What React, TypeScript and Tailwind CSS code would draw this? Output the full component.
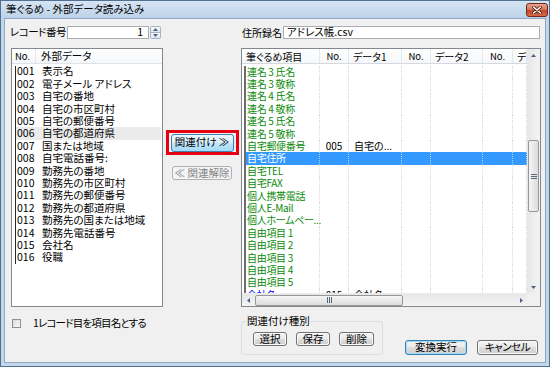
import React from 'react';

// 外部データ読み込みダイアログ（Vista Basic 風）

const leftRows = [
  ['001', '表示名'],
  ['002', '電子メール アドレス'],
  ['003', '自宅の番地'],
  ['004', '自宅の市区町村'],
  ['005', '自宅の郵便番号'],
  ['006', '自宅の都道府県'],
  ['007', '国または地域'],
  ['008', '自宅電話番号:'],
  ['009', '勤務先の番地'],
  ['010', '勤務先の市区町村'],
  ['011', '勤務先の郵便番号'],
  ['012', '勤務先の都道府県'],
  ['013', '勤務先の国または地域'],
  ['014', '勤務先電話番号'],
  ['015', '会社名'],
  ['016', '役職'],
];

type GridRow = { name: string; no?: string; data?: string; blue?: boolean; selected?: boolean };

const gridRows: GridRow[] = [
  { name: '連名 3 氏名' },
  { name: '連名 3 敬称' },
  { name: '連名 4 氏名' },
  { name: '連名 4 敬称' },
  { name: '連名 5 氏名' },
  { name: '連名 5 敬称' },
  { name: '自宅郵便番号', no: '005', data: '自宅の...' },
  { name: '自宅住所', selected: true },
  { name: '自宅TEL' },
  { name: '自宅FAX' },
  { name: '個人携帯電話' },
  { name: '個人E-Mail' },
  { name: '個人ホームペー...' },
  { name: '自由項目 1' },
  { name: '自由項目 2' },
  { name: '自由項目 3' },
  { name: '自由項目 4' },
  { name: '自由項目 5' },
  { name: '会社名', no: '015', data: '会社名', blue: true },
];

const btn =
  'flex items-center justify-center rounded-[3px] border leading-none border-[#707070] bg-[linear-gradient(#f2f2f2_0%,#ebebeb_49%,#dddddd_50%,#cfcfcf_100%)] shadow-[inset_0_0_0_1px_#fbfbfb]';

function Tri({ dir }: { dir: 'up' | 'down' | 'left' | 'right' }) {
  if (dir === 'up' || dir === 'down') {
    return (
      <svg viewBox="0 0 5 3" className="w-[5px] h-[3px]">
        <polygon points={dir === 'up' ? '0,3 2.5,0 5,3' : '0,0 2.5,3 5,0'} fill="#4d6185" />
      </svg>
    );
  }
  return (
    <svg viewBox="0 0 3 5" className="w-[3px] h-[5px]">
      <polygon points={dir === 'left' ? '3,0 0,2.5 3,5' : '0,0 3,2.5 0,5'} fill="#4d6185" />
    </svg>
  );
}

function CloseButton() {
  return (
    <div className="w-[22px] h-[14px] rounded-[3px] border border-[#6e2a1e] bg-[linear-gradient(#eaa58f_0%,#d8765d_45%,#c1472b_55%,#d86a48_100%)] flex items-center justify-center">
      <svg viewBox="0 0 10 8" className="w-[10px] h-[8px]">
        <path d="M1.5 1 L8.5 7 M8.5 1 L1.5 7" stroke="#5a1a10" strokeWidth="3" strokeLinecap="round" />
        <path d="M1.5 1 L8.5 7 M8.5 1 L1.5 7" stroke="#ffffff" strokeWidth="1.6" strokeLinecap="round" />
      </svg>
    </div>
  );
}

function LeftList() {
  return (
    <div className="mt-[9px] h-[259px] border border-[#828790] bg-white flex flex-col">
      <div className="h-[15px] flex items-center border-b border-[#dde3ea] bg-[linear-gradient(#ffffff,#f5f7f9)]">
        <div className="w-[24px] shrink-0 h-full flex items-center pl-[3px] border-r border-[#e3e8ee] text-[9.5px]">No.</div>
        <div className="pl-[5px] whitespace-nowrap">外部データ</div>
      </div>
      <div className="pt-[1.5px]">
        {leftRows.map(([no, label]) => (
          <div
            key={no}
            className={`h-[12.4px] flex items-center ml-[3px] mr-px border-l border-[#2a2a2a] ${no === '006' ? 'bg-[#ebebeb]' : ''}`}
          >
            <span className="w-[26px] shrink-0 pl-px leading-none">{no}</span>
            <span className="leading-none whitespace-nowrap">{label}</span>
          </div>
        ))}
      </div>
    </div>
  );
}

const headCells = [
  { w: 'w-[78px]', t: '筆ぐるめ項目', c: 'pl-[4px]' },
  { w: 'w-[29px]', t: 'No.', c: 'justify-center text-[9.5px]' },
  { w: 'w-[53px]', t: 'データ1', c: 'pl-[4px]' },
  { w: 'w-[29px]', t: 'No.', c: 'justify-center text-[9.5px]' },
  { w: 'w-[52px]', t: 'データ2', c: 'pl-[4px]' },
  { w: 'w-[30px]', t: 'No.', c: 'justify-center text-[9.5px]' },
  { w: 'w-[14px]', t: 'デ', c: 'pl-[4px] overflow-hidden' },
];

const rowCells = ['w-[74px]', 'w-[29px]', 'w-[53px]', 'w-[29px]', 'w-[52px]', 'w-[30px]', 'w-[14px]'];

function Grip({ vertical }: { vertical?: boolean }) {
  return vertical ? (
    <svg viewBox="0 0 6 5" className="w-[6px] h-[5px]">
      <path d="M0 0.5H6M0 2.5H6M0 4.5H6" stroke="#5d6b82" strokeWidth="1" />
    </svg>
  ) : (
    <svg viewBox="0 0 5 6" className="w-[5px] h-[6px]">
      <path d="M0.5 0V6M2.5 0V6M4.5 0V6" stroke="#5d6b82" strokeWidth="1" />
    </svg>
  );
}

function Grid() {
  return (
    <div className="mt-[9px] h-[259px] border border-[#828790] bg-white flex text-[10px]">
      <div className="w-[285px] flex flex-col">
        <div className="h-[15px] flex border-b border-[#d5d9de] bg-[linear-gradient(#ffffff,#f5f7f9)]">
          {headCells.map((h, i) => (
            <div key={i} className={`${h.w} shrink-0 h-full flex items-center whitespace-nowrap border-r border-[#e3e8ee] ${h.c}`}>
              {h.t}
            </div>
          ))}
        </div>
        <div className="flex-1 overflow-hidden pt-[1.5px]">
          {gridRows.map((r, i) => {
            const texts = [r.name, r.no ?? '', r.data ?? '', '', '', '', ''];
            return (
              <div
                key={i}
                className={`h-[12.4px] ml-[2px] flex border-l-2 border-[#6d6d6d] ${r.selected ? 'bg-[#3399ff] text-white' : ''}`}
              >
                {rowCells.map((w, j) => (
                  <div
                    key={j}
                    className={`${w} shrink-0 h-full flex items-center whitespace-nowrap leading-none border-r border-dotted ${
                      r.selected ? 'border-[#a9d1fb]' : 'border-[#dcdcdc]'
                    } ${j === 0 ? 'pl-px tracking-[-0.3px]' : j === 1 ? 'justify-center' : j === 2 ? 'pl-[5px]' : ''} ${
                      j === 0 && !r.selected ? (r.blue ? 'text-[#0000ff]' : 'text-[#0a8a0a]') : ''
                    }`}
                  >
                    {texts[j]}
                  </div>
                ))}
              </div>
            );
          })}
        </div>
        <div className="h-[13px] flex items-center bg-[linear-gradient(#e6e6e6,#f4f4f4)] border-t border-[#ececec]">
          <div className="w-[12px] h-full flex items-center justify-center">
            <Tri dir="left" />
          </div>
          <div className="ml-px w-[148px] h-[11px] rounded-[2px] border border-[#979797] bg-[linear-gradient(#f5f5f5,#dcdcdc)] flex items-center justify-center">
            <Grip />
          </div>
          <div className="flex-1" />
          <div className="w-[12px] h-full flex items-center justify-center">
            <Tri dir="right" />
          </div>
        </div>
      </div>
      <div className="w-[13px] flex flex-col">
        <div className="flex-1 flex flex-col bg-[linear-gradient(90deg,#e6e6e6,#f4f4f4)]">
          <div className="h-[12px] flex items-center justify-center">
            <Tri dir="up" />
          </div>
          <div className="h-[79px]" />
          <div className="mx-px h-[72px] rounded-[2px] border border-[#979797] bg-[linear-gradient(90deg,#f5f5f5,#dcdcdc)] flex items-center justify-center">
            <Grip vertical />
          </div>
          <div className="flex-1" />
          <div className="h-[12px] flex items-center justify-center">
            <Tri dir="down" />
          </div>
        </div>
        <div className="h-[13px] bg-[#f0f0f0]" />
      </div>
    </div>
  );
}

export default function App() {
  return (
    <div className="w-[550px] h-[367px] overflow-hidden border border-[#52708f] bg-[#c3d6eb] flex flex-col font-['Noto_Sans_CJK_JP','Noto_Sans',sans-serif] [font-feature-settings:'palt'] text-[10.5px] text-black">
      <div className="h-[17px] flex items-center justify-between pl-[5px] pr-px bg-[linear-gradient(#d6e4f3,#bdd2e9)]">
        <span className="leading-none">筆ぐるめ - 外部データ読み込み</span>
        <CloseButton />
      </div>

      <div className="mx-[3px] mb-[3px] flex-1 border border-[#8fa8c4] bg-[#f0f0f0] flex pl-[6px] pt-[7px] pr-[4px]">
        {/* 左：外部データ */}
        <div className="w-[152px] shrink-0 flex flex-col">
          <div className="h-[13px] flex items-center">
            <span className="w-[57px] shrink-0 -ml-px leading-none whitespace-nowrap tracking-[-0.5px]">レコード番号</span>
            <div className="w-[82px] shrink-0 h-[13px] bg-white border border-[#abadb3] flex items-center justify-end pr-[5px] leading-none">
              1
            </div>
            <div className="ml-px w-[11px] shrink-0 h-[13px] flex flex-col border border-[#a7b2c0] rounded-[2px] overflow-hidden">
              <div className="flex-1 flex items-center justify-center bg-[linear-gradient(#f6f9fc,#dce6f1)] border-b border-[#a7b2c0]">
                <Tri dir="up" />
              </div>
              <div className="flex-1 flex items-center justify-center bg-[linear-gradient(#f6f9fc,#dce6f1)]">
                <Tri dir="down" />
              </div>
            </div>
          </div>
          <LeftList />
          <div className="mt-[11px] h-[10px] flex items-center">
            <div className="ml-px w-[9px] h-[9px] shrink-0 border border-[#8f8f8f] bg-[linear-gradient(135deg,#dcdcdc,#f8f8f8)]" />
            <span className="ml-[12px] leading-none whitespace-nowrap tracking-[-0.8px]">1レコード目を項目名とする</span>
          </div>
        </div>

        {/* 中央：関連付けボタン */}
        <div className="w-[78px] shrink-0 flex flex-col items-center pt-[104px]">
          <div className="w-[73px] h-[25px] border-[3px] border-[#e60012] flex items-center justify-center">
            <button className="w-[63px] h-[18px] flex items-center justify-center rounded-[3px] border border-[#3c7fb1] bg-[linear-gradient(#eaf6fd_0%,#d9f0fc_49%,#bee6fd_50%,#a7d9f5_100%)] leading-none whitespace-nowrap">
              関連付け ≫
            </button>
          </div>
          <button className="mt-[11px] w-[60px] h-[14px] flex items-center justify-center rounded-[3px] border border-[#adb2b5] bg-[#f4f4f4] text-[#838383] leading-none whitespace-nowrap">
            ≪ 関連解除
          </button>
        </div>

        {/* 右：筆ぐるめ項目 */}
        <div className="w-[300px] shrink-0 flex flex-col">
          <div className="h-[13px] flex items-center">
            <span className="w-[42px] shrink-0 pl-px leading-none whitespace-nowrap text-[10px]">住所録名</span>
            <div className="w-[257px] shrink-0 h-[13px] bg-white border border-[#abadb3] flex items-center pl-[3px] leading-none">
              アドレス帳.csv
            </div>
          </div>
          <Grid />
          <div className="mt-[8px] flex items-end justify-between">
            <fieldset className="w-[142px] h-[40px] border border-[#d5dfe5] rounded-[3px]">
              <legend className="ml-[4px] px-px leading-[12px]">関連付け種別</legend>
              <div className="pl-[11px] pt-[5px] flex gap-[9px]">
                <button className={`${btn} w-[34px] h-[14px]`}>選択</button>
                <button className={`${btn} w-[34px] h-[14px]`}>保存</button>
                <button className={`${btn} w-[35px] h-[14px]`}>削除</button>
              </div>
            </fieldset>
            <div className="flex gap-[10px] mr-[3px]">
              <button className="w-[62px] h-[15px] flex items-center justify-center rounded-[3px] border border-[#3c7fb1] shadow-[inset_0_0_0_1px_#9ddcf9] bg-[linear-gradient(#f2f2f2_0%,#ebebeb_49%,#dddddd_50%,#cfcfcf_100%)] leading-none">
                変換実行
              </button>
              <button className={`${btn} w-[61px] h-[15px] tracking-[-0.5px]`}>キャンセル</button>
            </div>
          </div>
        </div>
      </div>
    </div>
  );
}
